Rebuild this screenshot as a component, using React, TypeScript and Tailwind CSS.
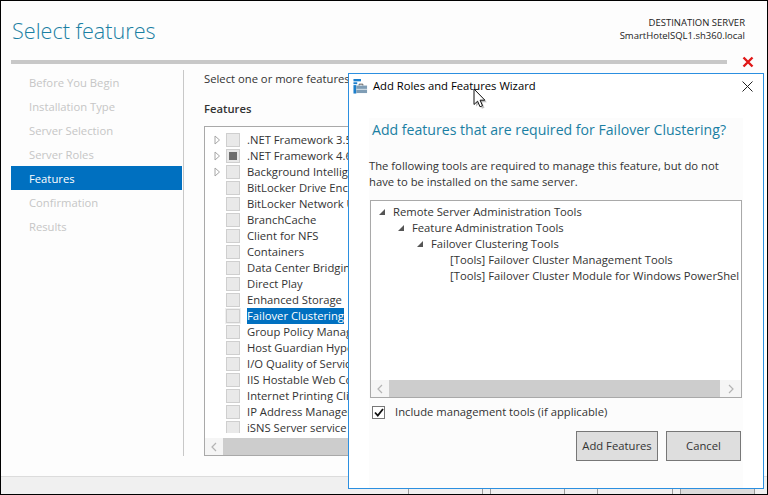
const steps = ["Before You Begin", "Installation Type", "Server Selection", "Server Roles", "Features", "Confirmation", "Results"];

const features = [
  ".NET Framework 3.5 Features",
  ".NET Framework 4.6 Features (2 of 7 installed)",
  "Background Intelligent Transfer Service (BITS)",
  "BitLocker Drive Encryption",
  "BitLocker Network Unlock",
  "BranchCache",
  "Client for NFS",
  "Containers",
  "Data Center Bridging",
  "Direct Play",
  "Enhanced Storage",
  "Failover Clustering",
  "Group Policy Management",
  "Host Guardian Hyper-V Support",
  "I/O Quality of Service",
  "IIS Hostable Web Core",
  "Internet Printing Client",
  "IP Address Management (IPAM) Server",
  "iSNS Server service",
];

const tree = [
  { label: "Remote Server Administration Tools", indent: "pl-[22px]", arrow: true },
  { label: "Feature Administration Tools", indent: "pl-[41px]", arrow: true },
  { label: "Failover Clustering Tools", indent: "pl-[60px]", arrow: true },
  { label: "[Tools] Failover Cluster Management Tools", indent: "pl-[79px]", arrow: false },
  { label: "[Tools] Failover Cluster Module for Windows PowerShell", indent: "pl-[79px]", arrow: false },
];

function Chevron({ dir }: { dir: "left" | "right" }) {
  return (
    <svg width="6" height="10" viewBox="0 0 6 10" className="shrink-0">
      <path d={dir === "left" ? "M5 1 1 5l4 4" : "M1 1l4 4-4 4"} fill="none" stroke="#b4b4b4" strokeWidth="1.2" />
    </svg>
  );
}

function Expander() {
  return (
    <svg width="7" height="10" viewBox="0 0 7 10" className="absolute left-[9px] top-[3px]">
      <path d="M1 1v8l4.500-4z" fill="#fff" stroke="#a6a6a6" />
    </svg>
  );
}

function FeatureRow({ label, index }: { label: string; index: number }) {
  const selected = label === "Failover Clustering";
  return (
    <div className="relative flex h-4 items-center pl-[21px]">
      {index < 3 && <Expander />}
      <div className={`flex h-[14px] w-[14px] shrink-0 items-center justify-center border border-[#cfcfcf] bg-[#e9e9e9] ${selected ? "outline outline-1 outline-[#efefef]" : ""}`}>
        {index === 1 && <div className="h-2 w-2 bg-[#6e6e6e]" />}
      </div>
      <span className={`ml-[7px] whitespace-nowrap leading-4 ${selected ? "bg-[#0070c0] text-white" : "text-[#333]"}`}>{label}</span>
    </div>
  );
}

function ScrollBar({ children }: { children: React.ReactNode }) {
  return <div className="flex h-[17px] shrink-0 items-center bg-[#f5f5f5]">{children}</div>;
}

function WizardIcon() {
  return (
    <svg width="15" height="15" viewBox="0 0 15 16" className="shrink-0">
      <rect x="0" y="0" width="8" height="2.500" fill="#1b7fcc" />
      <rect x="0" y="3.500" width="4" height="2" fill="#1b7fcc" />
      <rect x="0" y="6.500" width="3" height="9" fill="#1b7fcc" />
      <path d="M6 7V5.500h4V7" fill="none" stroke="#555" />
      <rect x="3" y="7" width="11.500" height="8" fill="#7f9db5" />
      <rect x="3" y="10.500" width="11.500" height="1" fill="#dfe8ef" />
    </svg>
  );
}

function Cursor() {
  return (
    <svg width="15" height="22" viewBox="0 0 15 22" className="absolute left-[473px] top-[88px]">
      <path d="M1.500 1.500v15.500l3.500-3.300 2.400 5.600 2.600-1.100-2.400-5.500h4.800z" fill="#000" opacity="0.25" transform="translate(1.500 1.500)" />
      <path d="M1 1v15.500l3.600-3.300 2.400 5.600 2.500-1.100-2.400-5.500h4.800z" fill="#fff" stroke="#111" strokeWidth="1" />
    </svg>
  );
}

export default function App() {
  return (
    <div className="relative flex h-[495px] w-[768px] flex-col overflow-hidden bg-[#fdfdfd] text-[11.25px] text-[#333] [font-family:'Open_Sans',sans-serif]">
      {/* Window frame */}
      <div className="pointer-events-none absolute inset-0 z-30 border border-black" />

      {/* Header */}
      <div className="flex h-[60px] shrink-0 justify-between pl-3 pr-[23px]">
        <h1 className="pt-[13px] text-[21.6px] font-light leading-9 text-[#1a7fa3]">Select features</h1>
        <div className="pt-[16px] text-right text-[9.5px] leading-[13px] text-[#222]">
          <div>DESTINATION SERVER</div>
          <div>SmartHotelSQL1.sh360.local</div>
        </div>
      </div>
      <div className="ml-[11px] h-1 w-[716px] shrink-0 bg-[#c8c8c8]" />

      {/* Body */}
      <div className="flex min-h-0 flex-1 pt-[6px]">
        <nav className="w-[173px] shrink-0 pl-[11px]">
          <div className="w-[171px]">
            {steps.map((s) => (
              <div key={s} className={`h-6 pl-[18px] leading-[26px] ${s === "Features" ? "bg-[#0070c0] text-white" : "text-[#c6c6c6]"}`}>
                {s}
              </div>
            ))}
          </div>
        </nav>
        <div className="ml-[10px] mb-[20px] flex w-[420px] flex-col border-l border-[#c8c8c8] pl-5">
          <div className="pt-px leading-4">Select one or more features to install on the selected server.</div>
          <div className="mt-[14px] font-semibold leading-4">Features</div>
          <div className="mt-[9px] flex h-[330px] flex-col border border-[#a9a9a9] bg-white">
            <div className="h-[306px] overflow-hidden pt-[5px]">
              {features.map((f, i) => (
                <FeatureRow key={f} label={f} index={i} />
              ))}
            </div>
            <div className="mt-auto">
              <ScrollBar>
                <div className="flex w-[18px] justify-center"><Chevron dir="left" /></div>
                <div className="h-full flex-1 bg-[#cdcdcd]" />
              </ScrollBar>
            </div>
          </div>
        </div>
      </div>

      {/* Footer */}
      <div className="flex h-[19px] shrink-0 items-start border-t border-[#dcdcdc] bg-[#f0f0f0] pl-[408px] pt-[11px]">
        <div className="h-2 w-[75px] border-x border-[#9a9a9a]" />
        <div className="ml-[7px] h-2 w-[75px] border-x border-[#9a9a9a]" />
        <div className="ml-[32px] h-2 w-[76px] border-x border-[#9a9a9a]" />
        <div className="ml-[7px] h-2 w-[75px] border-x border-[#9a9a9a] bg-[#dcdcdc]" />
      </div>

      {/* Red close mark */}
      <svg width="12" height="12" viewBox="0 0 12 12" className="absolute left-[742px] top-[56px]">
        <path d="M1.500 1.500l9 9M10.500 1.500l-9 9" stroke="#e01818" strokeWidth="2.400" />
      </svg>

      {/* Wizard dialog */}
      <div className="absolute left-[348px] top-[73px] z-10 flex h-[416px] w-[416px] flex-col border border-[#2b8fe0] bg-white">
        <div className="flex h-[24px] shrink-0 items-center pl-1 pr-[10px]">
          <WizardIcon />
          <span className="ml-[5px] text-black">Add Roles and Features Wizard</span>
          <svg width="11" height="11" viewBox="0 0 11 11" className="ml-auto">
            <path d="M.5.500l10 10M10.500.500l-10 10" stroke="#222" strokeWidth="1" />
          </svg>
        </div>
        <div className="ml-5 mt-[20px] flex w-[374px] flex-1 flex-col bg-[#fcfcfc]">
          <h2 className="whitespace-nowrap pl-[3px] text-[14.1px] leading-[24px] text-[#1a7fa3]">Add features that are required for Failover Clustering?</h2>
          <p className="mt-[16px] leading-4">The following tools are required to manage this feature, but do not<br />have to be installed on the same server.</p>
          <div className="ml-px mt-[10px] flex h-[198px] w-[372px] flex-col border border-[#a9a9a9] bg-white">
            <div className="mr-[2px] min-h-0 flex-1 overflow-hidden pt-[3px]">
              {tree.map((t) => (
                <div key={t.label} className={`relative h-4 whitespace-nowrap leading-4 ${t.indent}`}>
                  {t.arrow && <span className="absolute top-[5px] h-0 w-0 -translate-x-[14px] border-b-[6px] border-l-[6px] border-b-[#555] border-l-transparent" />}
                  {t.label}
                </div>
              ))}
            </div>
            <ScrollBar>
              <div className="flex w-[18px] justify-center"><Chevron dir="left" /></div>
              <div className="h-full flex-1 bg-[#cdcdcd]" />
              <div className="flex w-[21px] justify-center"><Chevron dir="right" /></div>
            </ScrollBar>
          </div>
          <label className="ml-[3px] mt-[6px] flex h-4 items-center">
            <span className="flex h-[13px] w-[13px] items-center justify-center border border-[#777] bg-white">
              <svg width="10" height="9" viewBox="0 0 10 9"><path d="M1 4.500l2.800 3L9 1" fill="none" stroke="#111" strokeWidth="1.800" /></svg>
            </span>
            <span className="ml-[10px]">Include management tools (if applicable)</span>
          </label>
          <div className="mt-[11px] flex justify-end gap-2 pb-[7px] pr-[2px]">
            <button className="h-[30px] w-[82px] border border-[#777] bg-[#dedede] text-[#333]">Add Features</button>
            <button className="h-[30px] w-[75px] border border-[#777] bg-[#dedede] text-[#333]">Cancel</button>
          </div>
        </div>
      </div>

      <div className="z-20"><Cursor /></div>
    </div>
  );
}
